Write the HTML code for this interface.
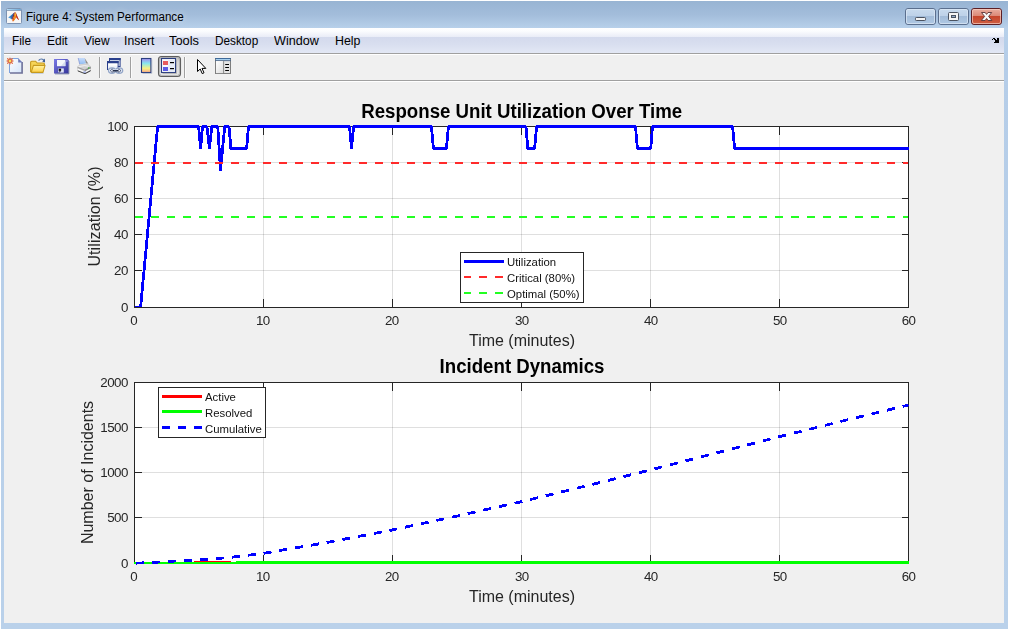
<!DOCTYPE html>
<html lang="en"><head><meta charset="utf-8"><title>Figure 4: System Performance</title>
<style>
html,body{margin:0;padding:0;background:#fff;}
body{width:1009px;height:630px;overflow:hidden;position:relative;font-family:"Liberation Sans", Arial, Helvetica, sans-serif;}
#win{position:absolute;left:1px;top:1px;width:1007px;height:628px;background:linear-gradient(#98b4d3 0,#a3bddb 14px,#b7d0ea 27px,#b5cde8 60px,#bad1ea 100%);}
#ttl{position:absolute;left:26px;top:9px;font-size:12.5px;line-height:16px;color:#000;white-space:nowrap;text-shadow:0 0 7px rgba(255,255,255,.55),0 0 12px rgba(255,255,255,.35);transform-origin:0 0;transform:scaleX(0.93);}
#menubar{position:absolute;left:4px;top:28px;width:1000px;height:25px;background:linear-gradient(#fefeff 0,#fbfcfe 3px,#e9ecf7 9px,#d4daed 9.5px,#d8deef 16px,#e3e8f5 25px);}
#menubar span{position:absolute;top:6px;font-size:12.5px;line-height:15px;color:#000;white-space:nowrap;transform-origin:0 0;}
#mline{position:absolute;left:4px;top:53px;width:1000px;height:1px;background:#a0a0a0;}
#mline2{position:absolute;left:4px;top:54px;width:1000px;height:1px;background:#fff;}
#toolbar{position:absolute;left:4px;top:55px;width:1000px;height:25px;background:#f0f0f0;}
#tline{position:absolute;left:4px;top:80px;width:1000px;height:1px;background:#a0a0a0;}
#tline2{position:absolute;left:4px;top:81px;width:1000px;height:1px;background:#fff;}
#figbg{position:absolute;left:4px;top:82px;width:1000px;height:541px;background:#f0f0f0;}
#fig{position:absolute;left:0;top:0;will-change:transform;}
.tk{font-family:"Liberation Sans", Arial, Helvetica, sans-serif;font-size:13.33px;fill:#262626;letter-spacing:-0.5px;}
.lb{font-family:"Liberation Sans", Arial, Helvetica, sans-serif;font-size:16px;fill:#262626;}
.ti{font-family:"Liberation Sans", Arial, Helvetica, sans-serif;font-size:18.67px;font-weight:bold;fill:#000;}
.lg{font-family:"Liberation Sans", Arial, Helvetica, sans-serif;font-size:11.35px;fill:#111;}
.btn{position:absolute;top:6px;height:17px;border-radius:3px;box-sizing:border-box;}
</style></head><body>
<div id="win"></div>
<div id="ttl">Figure 4: System Performance</div>
<div id="menubar"><span style="left:7.9px;transform:scaleX(0.943)">File</span><span style="left:42.6px;transform:scaleX(0.961)">Edit</span><span style="left:79.6px;transform:scaleX(0.949)">View</span><span style="left:120.1px;transform:scaleX(0.976)">Insert</span><span style="left:165.4px;transform:scaleX(1.028)">Tools</span><span style="left:210.9px;transform:scaleX(0.942)">Desktop</span><span style="left:269.7px;transform:scaleX(1.008)">Window</span><span style="left:330.8px;transform:scaleX(0.988)">Help</span></div>
<div id="mline"></div><div id="mline2"></div>
<div id="toolbar"></div>
<div id="tline"></div><div id="tline2"></div>
<div id="figbg"></div>
<svg id="chrome" width="1009" height="630" viewBox="0 0 1009 630" style="position:absolute;left:0;top:0">
<defs>
<linearGradient id="gBtn" x1="0" y1="0" x2="0" y2="1"><stop offset="0" stop-color="#c9dbee"/><stop offset="0.47" stop-color="#bdd1e8"/><stop offset="0.5" stop-color="#a3bcd9"/><stop offset="1" stop-color="#b0c9e4"/></linearGradient>
<linearGradient id="gCls" x1="0" y1="0" x2="0" y2="1"><stop offset="0" stop-color="#eab0a2"/><stop offset="0.47" stop-color="#db8876"/><stop offset="0.5" stop-color="#c6462c"/><stop offset="1" stop-color="#cf6044"/></linearGradient>
<linearGradient id="gPage" x1="0" y1="0" x2="1" y2="1"><stop offset="0" stop-color="#ffffff"/><stop offset="1" stop-color="#d4e4fa"/></linearGradient>
<linearGradient id="gFold" x1="0" y1="0" x2="0" y2="1"><stop offset="0" stop-color="#fff3a8"/><stop offset="1" stop-color="#ffd046"/></linearGradient>
<linearGradient id="gFlop" x1="0" y1="0" x2="1" y2="1"><stop offset="0" stop-color="#7a7ae6"/><stop offset="1" stop-color="#34349a"/></linearGradient>
<linearGradient id="gCbar" x1="0" y1="0" x2="0" y2="1"><stop offset="0" stop-color="#a48cf2"/><stop offset="0.35" stop-color="#86e6ee"/><stop offset="0.7" stop-color="#f6f284"/><stop offset="1" stop-color="#ffa888"/></linearGradient>
<linearGradient id="gPress" x1="0" y1="0" x2="0" y2="1"><stop offset="0" stop-color="#c4c4c4"/><stop offset="0.3" stop-color="#dcdcdc"/><stop offset="1" stop-color="#ececec"/></linearGradient>
<linearGradient id="gPan" x1="0" y1="0" x2="1" y2="1"><stop offset="0" stop-color="#ffffff"/><stop offset="1" stop-color="#dcdcdc"/></linearGradient>
<linearGradient id="gIconBar" x1="0" y1="0" x2="1" y2="0"><stop offset="0" stop-color="#b4dcf6"/><stop offset="1" stop-color="#6aa6d6"/></linearGradient>
<linearGradient id="gPaper" x1="0" y1="0" x2="0" y2="1"><stop offset="0" stop-color="#c8dcfa"/><stop offset="1" stop-color="#8ebcf2"/></linearGradient>
</defs>
<!-- window control buttons -->
<g>
<rect x="905.5" y="8.5" width="30" height="16" rx="2.5" fill="url(#gBtn)" stroke="#5b6f8e"/>
<rect x="906.5" y="9.5" width="28" height="14" rx="1.5" fill="none" stroke="#dbe7f4" stroke-opacity="0.75"/>
<rect x="915.5" y="17.5" width="10" height="3" rx="0.8" fill="#f4f4f4" stroke="#4a5260"/>
<rect x="938.5" y="8.5" width="30" height="16" rx="2.5" fill="url(#gBtn)" stroke="#5b6f8e"/>
<rect x="939.5" y="9.5" width="28" height="14" rx="1.5" fill="none" stroke="#dbe7f4" stroke-opacity="0.75"/>
<rect x="948.5" y="12.5" width="10" height="8" rx="1" fill="#f4f4f4" stroke="#4a5260"/>
<rect x="951.5" y="15.5" width="4" height="2" fill="#8fa9c8" stroke="#4a5260"/>
<rect x="971.5" y="8.5" width="30" height="16" rx="2.5" fill="url(#gCls)" stroke="#5c1f25"/>
<rect x="972.5" y="9.5" width="28" height="14" rx="1.5" fill="none" stroke="#f6cfc4" stroke-opacity="0.7"/>
<path d="M981.5 12.5H985.2L986.6 14.4 988 12.5H991.7L988.6 16.4 991.9 20.5H988.1L986.6 18.5 985.1 20.5H981.3L984.6 16.4z" fill="#f8f8f8" stroke="#5a3234" stroke-width="0.9" stroke-linejoin="round"/>
</g>
<!-- MATLAB figure icon -->
<g>
<rect x="6.5" y="8.5" width="15" height="15" rx="1" fill="#f6f6f6" stroke="#7d93b2"/>
<rect x="7" y="9" width="14" height="1.2" fill="url(#gIconBar)"/>
<rect x="7" y="10.2" width="14" height="0.8" fill="#7f95b0"/>
<path d="M8.2 17.4L13.6 13.2 12.8 16.6 11.6 19.2 10.4 18.6z" fill="#4a98d8"/>
<path d="M10.4 16.4L13.6 13.2 12.8 16.6 11.6 19.2z" fill="#2f6fb4"/>
<path d="M13.6 13.2L15 12 14 16.2 12.4 19.4 11.6 19.2z" fill="#70303c"/>
<path d="M12.4 19.4C13.6 17.6 14.4 13.2 15.3 11.9 16.4 13.4 17.3 17.4 19.1 19.9 17.6 19.7 16.8 18.3 16.2 17.3 15.2 18.6 14.2 21.2 12.8 21.6 12.4 21 12.2 20.2 12.4 19.4z" fill="#e2561c"/>
<path d="M15.3 11.9C15.8 13.2 16 15.6 15.7 17.5 14.9 18.5 14.2 20.7 13 21.4 14.2 19 14.6 14.6 15.3 11.9z" fill="#f4a01c"/>
<path d="M15.3 12.1L15.8 15.4 14.8 15.6z" fill="#f9d23a"/>
<path d="M15.7 12.6C16.9 14.6 17.5 17.8 19.1 19.9 17.9 19.4 17.2 18.4 16.4 17z" fill="#bc322a"/>
</g>
<!-- menu corner arrow -->
<path d="M993 38h2v1h-2zM992 39h1v1h-1zM994 39h2v1h-2zM997 38h2v5h-2zM995 40h2v1h-2zM995 41h2v1h-2zM994 42h3v1h-3z" fill="#000" shape-rendering="crispEdges"/>
<!-- toolbar: new -->
<g>
<path d="M9.5 58.5H18.5L22 62V73H9.5z" fill="url(#gPage)"/>
<path d="M9.5 73V58.5H18.5" fill="none" stroke="#7fa2de"/>
<path d="M10 73H22.1V62" fill="none" stroke="#6d7098" stroke-width="1.6"/>
<path d="M18.2 58.2L22.6 62.6H18.2z" fill="#6f7ab8"/>
<circle cx="10" cy="61" r="2.8" fill="#e2724c"/>
<rect x="9" y="60" width="2" height="2" fill="#f4e05a"/>
<path d="M7 58h1v1h-1zM12 58h1v1h-1zM7 63h1v1h-1zM12 63h1v1h-1zM6.4 60.6h0.8v0.8h-0.8zM12.9 60.6h0.8v0.8h-0.8zM9.6 57.4h0.8v0.8h-0.8zM9.6 63.9h0.8v0.8h-0.8z" fill="#e2724c" opacity="0.9"/>
</g>
<!-- toolbar: open -->
<g>
<path d="M38.6 60.6C40 58.4 43 58.4 44.2 60.8" fill="none" stroke="#5576a8" stroke-width="1.1"/>
<path d="M42.2 61.6L45 58.6 45 62.4z" fill="#3f5e96"/>
<path d="M30.6 72V62.4C30.6 61.6 31.2 61.2 31.8 61.2H35.6L37.2 63H43.4C44 63 44.4 63.4 44.4 64V65" fill="#f6d458" stroke="#c79a1e" stroke-width="1.1"/>
<path d="M31.2 72.4L33.4 65.4H45L43 72.4z" fill="url(#gFold)" stroke="#c79a1e" stroke-width="1.1" stroke-linejoin="round"/>
<path d="M31.5 73.4H43.5" stroke="#9fb0c8" stroke-width="0.8" opacity="0.7"/>
</g>
<!-- toolbar: save -->
<g>
<path d="M54 59H67.4L68.6 60.2V73.4H54z" fill="url(#gFlop)"/>
<path d="M55 73.9H68.9V61" fill="none" stroke="#3a4a78" stroke-width="0.8" opacity="0.7"/>
<rect x="57" y="60" width="8.4" height="6.2" fill="#f4f6fb"/>
<path d="M61 66L65.4 61V66z" fill="#d6deee"/>
<rect x="58.2" y="68.4" width="5.6" height="4.2" fill="#dfe4f6"/>
<rect x="58.7" y="68.7" width="2.4" height="2.2" fill="#101018"/>
<path d="M58.2 72.6L60 70.8H61.2L59.6 72.6z" fill="#303050"/>
<rect x="66.4" y="60.4" width="1" height="1.2" fill="#e0e4ff"/>
</g>
<!-- toolbar: print -->
<g>
<path d="M78.2 58H84.6L86.2 63.6 79.8 64.6z" fill="url(#gPaper)"/>
<path d="M78.2 58L79.8 64.6" stroke="#7f8fd0" stroke-width="0.7" fill="none"/>
<path d="M84.6 58L88.4 63.8H86.2z" fill="#8c8c8c"/>
<path d="M77.4 66.6L79.8 64.2 86.4 63.6H87.8L90.8 66.6 85 69.6z" fill="#d2d2d2"/>
<path d="M77.4 66.6L85 69.6V73.8L77.4 70.8z" fill="#c0c0c0"/>
<path d="M85 69.6L90.8 66.6V70.8L85 73.8z" fill="#8a8a8a"/>
<path d="M78.6 66.6L84.8 65.6 88.6 66.2" fill="none" stroke="#f6f6f6" stroke-width="0.9"/>
<path d="M77.6 67.4L85 70.2" fill="none" stroke="#8e8e8e" stroke-width="0.7"/>
<path d="M77.8 69.3L85 72.1 90.6 69.2" fill="none" stroke="#f8f8f8" stroke-width="1.5"/>
<path d="M77.8 70.9L85 73.7 90.6 70.8" fill="none" stroke="#484848" stroke-width="1"/>
<rect x="88.2" y="67.2" width="1.1" height="1.6" fill="#38b438"/>
<rect x="83.4" y="71.6" width="2.4" height="0.9" fill="#5a70d0"/>
</g>
<!-- separators -->
<path d="M99.5 57v21M130.5 57v21M184.5 57v21" stroke="#a0a0a0" shape-rendering="crispEdges"/>
<path d="M100.5 57v21M131.5 57v21M185.5 57v21" stroke="#fbfbfb" shape-rendering="crispEdges"/>
<!-- toolbar: link -->
<g>
<rect x="109.5" y="58.5" width="10.6" height="8" fill="#f2f5fb" stroke="#2a408c"/>
<rect x="109" y="58" width="11.6" height="2.2" fill="#2a408c"/>
<rect x="107.5" y="61.5" width="10.6" height="8" fill="#eef1f8" stroke="#2a408c"/>
<rect x="107" y="61" width="11.6" height="2.2" fill="#2a408c"/>
<rect x="108.6" y="64" width="8.6" height="1.6" fill="#ffffff"/>
<ellipse cx="112" cy="70.6" rx="3.5" ry="2.8" fill="#eef2fa" stroke="#93a6c8" stroke-width="1.3"/>
<ellipse cx="119.2" cy="70.6" rx="3.5" ry="2.8" fill="#eef2fa" stroke="#93a6c8" stroke-width="1.3"/>
<path d="M113.4 69.2C111.6 68.9 110.6 69.6 110.6 70.6 110.6 71.6 111.6 72.3 113.4 72" fill="none" stroke="#3a4a72" stroke-width="0.9"/>
<path d="M117.8 69.2C119.6 68.9 120.6 69.6 120.6 70.6 120.6 71.6 119.6 72.3 117.8 72" fill="none" stroke="#3a4a72" stroke-width="0.9"/>
<rect x="112.6" y="70" width="6" height="1.6" rx="0.6" fill="#1c2642"/>
<path d="M113 69.6H118.2" stroke="#d4def2" stroke-width="0.8"/>
</g>
<!-- toolbar: colorbar -->
<g>
<rect x="141.5" y="58.5" width="9.4" height="14" fill="url(#gCbar)" stroke="#2b3f80" stroke-width="1.1"/>
<path d="M142.6 73.4H151.8V59.6" fill="none" stroke="#8d96ae" stroke-width="0.7" opacity="0.7"/>
</g>
<!-- toolbar: legend (pressed) -->
<g>
<rect x="158.5" y="56.5" width="22" height="20" rx="3" fill="url(#gPress)" stroke="#5e5e5e" stroke-width="1.1"/>
<rect x="159.6" y="57.6" width="19.8" height="17.8" rx="2.2" fill="none" stroke="#a8a8a8" stroke-width="0.8"/>
<rect x="161.5" y="58.5" width="14" height="14" fill="#f8f9fd" stroke="#2b3f80" stroke-width="1.1"/>
<path d="M162.6 73.4H176.6V59.6" fill="none" stroke="#9a9a9a" stroke-width="0.8" opacity="0.8"/>
<rect x="168.2" y="60" width="6.6" height="12" fill="#e6ebf6"/>
<rect x="163" y="61" width="5" height="4" fill="#e65c60"/>
<rect x="163" y="67" width="5" height="4" fill="#5c5ce6"/>
<rect x="170" y="62" width="4" height="1.2" fill="#000"/>
<rect x="170" y="68" width="4" height="1.2" fill="#000"/>
</g>
<!-- toolbar: pointer -->
<path d="M197.5 59.5V71.5L200.2 69 202.2 73.6 204 72.8 202 68.4H205.8z" fill="#fff" stroke="#000" stroke-width="1" stroke-linejoin="miter"/>
<!-- toolbar: property inspector -->
<g>
<rect x="215.5" y="58.5" width="15" height="15" fill="#e4e4e4" stroke="#7e7e7e"/>
<rect x="215" y="58" width="16" height="1" fill="#3f6a9a"/>
<rect x="216" y="59" width="14" height="1.2" fill="#a6d0f0"/>
<rect x="215" y="60.2" width="16" height="0.9" fill="#4a678a"/>
<rect x="216" y="61.1" width="7.1" height="12" fill="url(#gPan)"/>
<rect x="223.1" y="61.1" width="1" height="12" fill="#8a8a8a"/>
<path d="M225.2 64.5h3.8M225.2 67.5h3.8M225.2 70.5h3.8" stroke="#000" stroke-width="1.1"/>
</g>
</svg>

<svg id="fig" width="1009" height="630" viewBox="0 0 1009 630">
<rect x="134" y="126" width="775" height="182" fill="#fff"/>
<path d="M263.5 126V308M392.5 126V308M521.5 126V308M650.5 126V308M779.5 126V308" stroke="#262626" stroke-opacity="0.15" stroke-width="1" fill="none" shape-rendering="crispEdges"/>
<path d="M134 270.5H909M134 234.5H909M134 198.5H909M134 162.5H909" stroke="#262626" stroke-opacity="0.15" stroke-width="1" fill="none" shape-rendering="crispEdges"/>
<g clip-path="url(#c1)">
<path d="M134.5 307.2L140.6 307.2L157.6 126.5L198.6 126.5L200.6 148.5L202.5 126.5L206.9 126.5L209.4 148.5L211.9 126.5L217.8 126.5L220.5 171.0L222.6 148.5L224.8 126.5L229.0 126.5L230.9 148.5L246.6 148.5L248.5 126.5L349.5 126.5L351.5 148.5L353.6 126.5L431.4 126.5L433.4 148.5L446.4 148.5L448.4 126.5L526.0 126.5L527.8 148.5L534.6 148.5L536.6 126.5L635.5 126.5L637.4 148.5L650.7 148.5L652.5 126.5L732.6 126.5L734.6 148.5L909.0 148.5" fill="none" stroke="#0000ff" stroke-width="2.8" stroke-linejoin="bevel" shape-rendering="crispEdges"/>
</g>
<path d="M263.5 308v-9M263.5 126v9M392.5 308v-9M392.5 126v9M521.5 308v-9M521.5 126v9M650.5 308v-9M650.5 126v9M779.5 308v-9M779.5 126v9M134 270.5h8M909 270.5h-7M134 234.5h8M909 234.5h-7M134 198.5h8M909 198.5h-7M134 162.5h8M909 162.5h-7" stroke="#262626" stroke-width="1" fill="none" shape-rendering="crispEdges"/>
<rect x="134.5" y="126.5" width="774" height="181" fill="none" stroke="#262626" stroke-width="1" shape-rendering="crispEdges"/>
<text x="133.8" y="324.5" text-anchor="middle" class="tk">0</text>
<text x="262.8" y="324.5" text-anchor="middle" class="tk">10</text>
<text x="391.8" y="324.5" text-anchor="middle" class="tk">20</text>
<text x="521.8" y="324.5" text-anchor="middle" class="tk">30</text>
<text x="650.8" y="324.5" text-anchor="middle" class="tk">40</text>
<text x="779.8" y="324.5" text-anchor="middle" class="tk">50</text>
<text x="908.6" y="324.5" text-anchor="middle" class="tk">60</text>
<text x="127.9" y="312.1" text-anchor="end" class="tk">0</text>
<text x="127.9" y="275.1" text-anchor="end" class="tk">20</text>
<text x="127.9" y="239.1" text-anchor="end" class="tk">40</text>
<text x="127.9" y="203.1" text-anchor="end" class="tk">60</text>
<text x="127.9" y="167.1" text-anchor="end" class="tk">80</text>
<text x="127.9" y="131.1" text-anchor="end" class="tk">100</text>
<path d="M134.5 307.2L140.6 307.2L157.6 126.5L198.6 126.5L200.6 148.5L202.5 126.5L206.9 126.5L209.4 148.5L211.9 126.5L217.8 126.5L220.5 171.0L222.6 148.5L224.8 126.5L229.0 126.5L230.9 148.5L246.6 148.5L248.5 126.5L349.5 126.5L351.5 148.5L353.6 126.5L431.4 126.5L433.4 148.5L446.4 148.5L448.4 126.5L526.0 126.5L527.8 148.5L534.6 148.5L536.6 126.5L635.5 126.5L637.4 148.5L650.7 148.5L652.5 126.5L732.6 126.5L734.6 148.5L909.0 148.5" fill="none" stroke="#0000ff" stroke-width="2.8" stroke-linejoin="bevel" shape-rendering="crispEdges" clip-path="url(#c1b)"/>
<path d="M134 163H908" fill="none" stroke="#ff2a2a" stroke-width="2" stroke-dasharray="8 8" stroke-dashoffset="-1" shape-rendering="crispEdges"/>
<path d="M134 217H908" fill="none" stroke="#22ff22" stroke-width="2" stroke-dasharray="8 8" stroke-dashoffset="-1" shape-rendering="crispEdges"/>
<rect x="134" y="382" width="775" height="182" fill="#fff"/>
<path d="M263.5 382V564M392.5 382V564M521.5 382V564M650.5 382V564M779.5 382V564" stroke="#262626" stroke-opacity="0.15" stroke-width="1" fill="none" shape-rendering="crispEdges"/>
<path d="M134 517.5H909M134 472.5H909M134 427.5H909" stroke="#262626" stroke-opacity="0.15" stroke-width="1" fill="none" shape-rendering="crispEdges"/>
<path d="M263.5 564v-9M263.5 382v9M392.5 564v-9M392.5 382v9M521.5 564v-9M521.5 382v9M650.5 564v-9M650.5 382v9M779.5 564v-9M779.5 382v9M134 517.5h8M909 517.5h-7M134 472.5h8M909 472.5h-7M134 427.5h8M909 427.5h-7" stroke="#262626" stroke-width="1" fill="none" shape-rendering="crispEdges"/>
<rect x="134.5" y="382.5" width="774" height="181" fill="none" stroke="#262626" stroke-width="1" shape-rendering="crispEdges"/>
<text x="133.8" y="580.5" text-anchor="middle" class="tk">0</text>
<text x="262.8" y="580.5" text-anchor="middle" class="tk">10</text>
<text x="391.8" y="580.5" text-anchor="middle" class="tk">20</text>
<text x="521.8" y="580.5" text-anchor="middle" class="tk">30</text>
<text x="650.8" y="580.5" text-anchor="middle" class="tk">40</text>
<text x="779.8" y="580.5" text-anchor="middle" class="tk">50</text>
<text x="908.6" y="580.5" text-anchor="middle" class="tk">60</text>
<text x="127.9" y="568.1" text-anchor="end" class="tk">0</text>
<text x="127.9" y="522.1" text-anchor="end" class="tk">500</text>
<text x="127.9" y="477.1" text-anchor="end" class="tk">1000</text>
<text x="127.9" y="432.1" text-anchor="end" class="tk">1500</text>
<text x="127.9" y="387.1" text-anchor="end" class="tk">2000</text>
<path d="M236 562.5H909" stroke="#00ff00" stroke-width="3" shape-rendering="crispEdges"/>
<path d="M134 563H236" stroke="#00ff00" stroke-width="2" shape-rendering="crispEdges"/>
<path d="M194 561.5H231" stroke="#ff0000" stroke-width="1" shape-rendering="crispEdges"/>
<path d="M134.5 563.2L150.0 562.6L172.0 561.2L204.0 559.7L232.0 557.2L263.6 553.3L328.0 542.3L392.0 530.0L456.0 516.3L521.0 501.8L585.0 486.2L650.0 470.0L714.0 453.6L779.0 436.8L843.0 420.9L908.5 405.0" fill="none" stroke="#0000ff" stroke-width="2.8" stroke-dasharray="8 8" stroke-dashoffset="-1.5" shape-rendering="crispEdges"/>
<text transform="translate(521.7 118) scale(1 1.06)" text-anchor="middle" class="ti">Response Unit Utilization Over Time</text>
<text transform="translate(522 373) scale(1 1.06)" text-anchor="middle" class="ti">Incident Dynamics</text>
<text x="522" y="345.5" text-anchor="middle" class="lb">Time (minutes)</text>
<text x="522" y="601.5" text-anchor="middle" class="lb">Time (minutes)</text>
<text transform="translate(100 216.5) rotate(-90)" text-anchor="middle" class="lb" letter-spacing="0.1">Utilization (%)</text>
<text transform="translate(93 472.5) rotate(-90)" text-anchor="middle" class="lb">Number of Incidents</text>
<rect x="460.5" y="252.5" width="123" height="50" fill="#fff" stroke="#262626" stroke-width="1" shape-rendering="crispEdges"/>
<path d="M464 261.5H504" stroke="#0000ff" stroke-width="3" shape-rendering="crispEdges"/>
<path d="M464 277h7M479 277h8M495 277h8" stroke="#ff2a2a" stroke-width="2" shape-rendering="crispEdges"/>
<path d="M464 293h7M479 293h8M495 293h8" stroke="#22ff22" stroke-width="2" shape-rendering="crispEdges"/>
<text x="507" y="265.5" class="lg">Utilization</text>
<text x="507" y="281.5" class="lg">Critical (80%)</text>
<text x="507" y="297.5" class="lg">Optimal (50%)</text>
<rect x="158.5" y="387.5" width="107" height="50" fill="#fff" stroke="#262626" stroke-width="1" shape-rendering="crispEdges"/>
<path d="M162 396.5H202" stroke="#ff0000" stroke-width="3" shape-rendering="crispEdges"/>
<path d="M162 411.5H202" stroke="#00ff00" stroke-width="3" shape-rendering="crispEdges"/>
<path d="M162 427.5H202" stroke="#0000ff" stroke-width="3" stroke-dasharray="8 8" shape-rendering="crispEdges"/>
<text x="205" y="401" class="lg">Active</text>
<text x="205" y="417" class="lg">Resolved</text>
<text x="205" y="433" class="lg">Cumulative</text>
<defs><clipPath id="c1"><rect x="134" y="124" width="775" height="184"/></clipPath><clipPath id="c1b"><rect x="134" y="124" width="775" height="30"/></clipPath></defs>
</svg>
</body></html>
